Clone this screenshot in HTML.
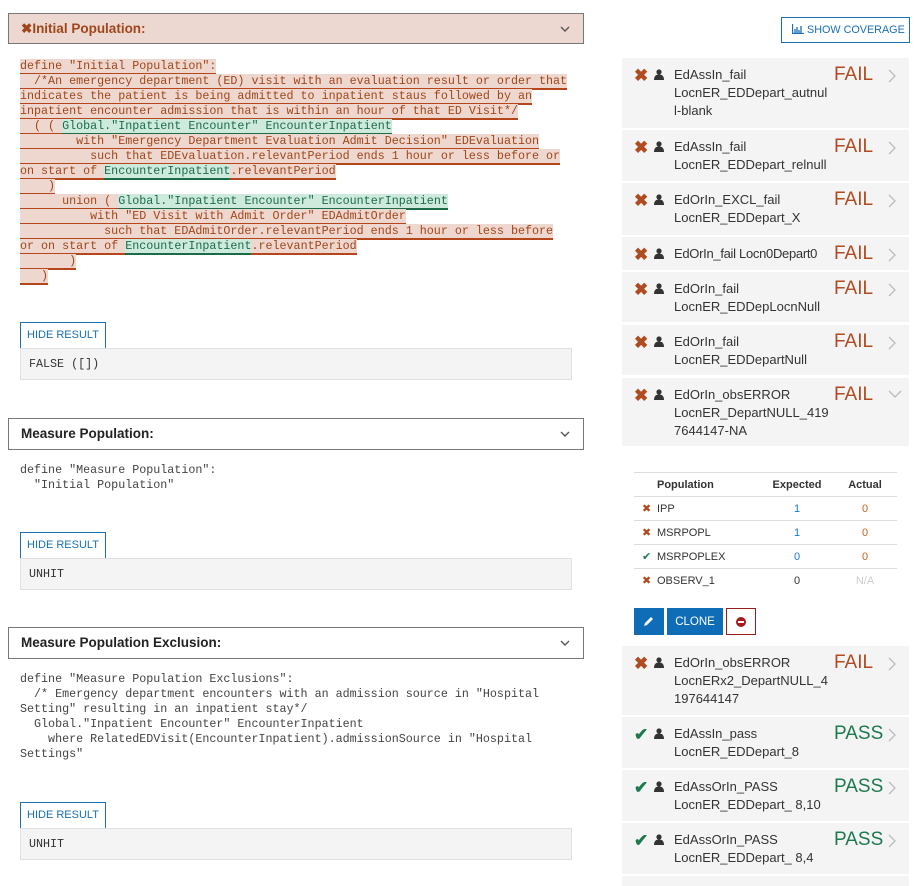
<!DOCTYPE html>
<html><head><meta charset="utf-8">
<style>
*{box-sizing:border-box;margin:0;padding:0}
body{width:918px;height:883px;background:#fff;font-family:"Liberation Sans",sans-serif;position:relative;overflow:hidden;color:#333}
.a{position:absolute}
.hdr{position:absolute;left:8px;width:576px;border:1px solid #777;background:#fff;font-weight:bold;font-size:13.5px;color:#222;padding-left:12px}
.chev{position:absolute;right:12px;top:50%;margin-top:-6px}
pre,.mono{font-family:"Liberation Mono",monospace;font-size:11.7px;line-height:15px;white-space:pre}
.code{position:absolute;left:20px;color:#444}
.r{background:#eed7cf;border-bottom:2px double #b5451b;color:#a0461a}
.g{background:#cdeadd;border-bottom:2px solid #1b6b48;color:#1c6b4c}
.btn{position:absolute;left:20px;width:86px;height:27px;border:1px solid #1a6fb5;color:#1a6fb5;font-size:11px;line-height:25px;text-align:center;background:#fff;white-space:nowrap}
.res{position:absolute;left:20px;width:552px;height:32px;background:#f4f4f4;border:1px solid #e0e0e0;font-family:"Liberation Mono",monospace;font-size:11.7px;color:#333;padding:8px 0 0 8px}
.it{position:absolute;left:622px;width:287px;background:#f4f4f4}
.it .ic{position:absolute;left:12px;top:8px;font-size:17px;font-weight:bold}
.it .p{position:absolute;left:32px;top:11px}
.it .t{position:absolute;left:52px;top:8px;font-size:13px;line-height:18px;color:#333;white-space:nowrap}
.it .s{position:absolute;left:212px;top:6px;font-size:19px}
.it .c{position:absolute;left:266px;top:11px}
.x{color:#b04a1f}.k{color:#1d7a4f}
table{border-collapse:collapse;font-size:11px}
td{height:24px;border-top:1px solid #ddd}
</style></head><body>

<div class="hdr" style="top:13px;height:31px;line-height:29px;background:#ecd8d0;color:#a0461a"><span style="color:#a0461a">✖</span>Initial Population:<svg class="chev" width="12" height="12" viewBox="0 0 12 12"><path d="M2 4l4 4 4-4" stroke="#555" stroke-width="1.4" fill="none"/></svg></div>

<div class="code mono" style="top:59px"><span class="r">define "Initial Population":</span>
<span class="r">  /*An emergency department (ED) visit with an evaluation result or order that</span>
<span class="r">indicates the patient is being admitted to inpatient staus followed by an</span>
<span class="r">inpatient encounter admission that is within an hour of that ED Visit*/</span>
<span class="r">  ( ( </span><span class="g">Global."Inpatient Encounter" EncounterInpatient</span>
<span class="r">        with "Emergency Department Evaluation Admit Decision" EDEvaluation</span>
<span class="r">          such that EDEvaluation.relevantPeriod ends 1 hour or less before or</span>
<span class="r">on start of </span><span class="g">EncounterInpatient</span><span class="r">.relevantPeriod</span>
<span class="r">    )</span>
<span class="r">      union ( </span><span class="g">Global."Inpatient Encounter" EncounterInpatient</span>
<span class="r">          with "ED Visit with Admit Order" EDAdmitOrder</span>
<span class="r">            such that EDAdmitOrder.relevantPeriod ends 1 hour or less before</span>
<span class="r">or on start of </span><span class="g">EncounterInpatient</span><span class="r">.relevantPeriod</span>
<span class="r">       )</span>
<span class="r">   )</span></div>

<div class="btn" style="top:322px">HIDE RESULT</div>
<div class="res" style="top:348px">FALSE ([])</div>

<div class="hdr" style="top:418px;height:32px;line-height:30px">Measure Population:<svg class="chev" width="12" height="12" viewBox="0 0 12 12"><path d="M2 4l4 4 4-4" stroke="#555" stroke-width="1.4" fill="none"/></svg></div>
<div class="code mono" style="top:463px">define "Measure Population":
  "Initial Population"</div>
<div class="btn" style="top:532px">HIDE RESULT</div>
<div class="res" style="top:558px">UNHIT</div>

<div class="hdr" style="top:627px;height:32px;line-height:30px">Measure Population Exclusion:<svg class="chev" width="12" height="12" viewBox="0 0 12 12"><path d="M2 4l4 4 4-4" stroke="#555" stroke-width="1.4" fill="none"/></svg></div>
<div class="code mono" style="top:672px">define "Measure Population Exclusions":
  /* Emergency department encounters with an admission source in "Hospital
Setting" resulting in an inpatient stay*/
  Global."Inpatient Encounter" EncounterInpatient
    where RelatedEDVisit(EncounterInpatient).admissionSource in "Hospital
Settings"</div>
<div class="btn" style="top:802px">HIDE RESULT</div>
<div class="res" style="top:828px">UNHIT</div>

<div class="a" style="left:781px;top:17px;width:129px;height:26px;border:1px solid #1a6fb5;color:#1a6fb5;font-size:10.8px;line-height:24px;padding-left:10px;white-space:nowrap"><svg width="12" height="10" viewBox="0 0 12 10" style="vertical-align:-1px"><path d="M0.5 0v9.5H12M3 9V5M5 9V3M7 9V6M9 9V2" stroke="#1a6fb5" stroke-width="1.3" fill="none"/></svg> SHOW COVERAGE</div>

<div class="it" style="top:58px;height:70px"><span class="ic x">✖</span><svg class="p" width="10" height="11" viewBox="0 0 10 11"><circle cx="5" cy="3" r="2.6" fill="#333"/><path d="M0 11c0-4 2-5.5 5-5.5s5 1.5 5 5.5z" fill="#333"/></svg><div class="t">EdAssIn_fail<br>LocnER_EDDepart_autnul<br>l-blank</div><div class="s x">FAIL</div><svg class="c" width="8" height="14" viewBox="0 0 8 14"><path d="M1 1l6 6-6 6" stroke="#bbb" stroke-width="1.3" fill="none"/></svg></div>
<div class="it" style="top:130px;height:51px"><span class="ic x">✖</span><svg class="p" width="10" height="11" viewBox="0 0 10 11"><circle cx="5" cy="3" r="2.6" fill="#333"/><path d="M0 11c0-4 2-5.5 5-5.5s5 1.5 5 5.5z" fill="#333"/></svg><div class="t">EdAssIn_fail<br>LocnER_EDDepart_relnull</div><div class="s x">FAIL</div><svg class="c" width="8" height="14" viewBox="0 0 8 14"><path d="M1 1l6 6-6 6" stroke="#bbb" stroke-width="1.3" fill="none"/></svg></div>
<div class="it" style="top:183px;height:52px"><span class="ic x">✖</span><svg class="p" width="10" height="11" viewBox="0 0 10 11"><circle cx="5" cy="3" r="2.6" fill="#333"/><path d="M0 11c0-4 2-5.5 5-5.5s5 1.5 5 5.5z" fill="#333"/></svg><div class="t">EdOrIn_EXCL_fail<br>LocnER_EDDepart_X</div><div class="s x">FAIL</div><svg class="c" width="8" height="14" viewBox="0 0 8 14"><path d="M1 1l6 6-6 6" stroke="#bbb" stroke-width="1.3" fill="none"/></svg></div>
<div class="it" style="top:237px;height:33px"><span class="ic x">✖</span><svg class="p" width="10" height="11" viewBox="0 0 10 11"><circle cx="5" cy="3" r="2.6" fill="#333"/><path d="M0 11c0-4 2-5.5 5-5.5s5 1.5 5 5.5z" fill="#333"/></svg><div class="t" style="letter-spacing:-0.3px">EdOrIn_fail Locn0Depart0</div><div class="s x">FAIL</div><svg class="c" width="8" height="14" viewBox="0 0 8 14"><path d="M1 1l6 6-6 6" stroke="#bbb" stroke-width="1.3" fill="none"/></svg></div>
<div class="it" style="top:272px;height:50px"><span class="ic x">✖</span><svg class="p" width="10" height="11" viewBox="0 0 10 11"><circle cx="5" cy="3" r="2.6" fill="#333"/><path d="M0 11c0-4 2-5.5 5-5.5s5 1.5 5 5.5z" fill="#333"/></svg><div class="t">EdOrIn_fail<br>LocnER_EDDepLocnNull</div><div class="s x">FAIL</div><svg class="c" width="8" height="14" viewBox="0 0 8 14"><path d="M1 1l6 6-6 6" stroke="#bbb" stroke-width="1.3" fill="none"/></svg></div>
<div class="it" style="top:325px;height:50px"><span class="ic x">✖</span><svg class="p" width="10" height="11" viewBox="0 0 10 11"><circle cx="5" cy="3" r="2.6" fill="#333"/><path d="M0 11c0-4 2-5.5 5-5.5s5 1.5 5 5.5z" fill="#333"/></svg><div class="t">EdOrIn_fail<br>LocnER_EDDepartNull</div><div class="s x">FAIL</div><svg class="c" width="8" height="14" viewBox="0 0 8 14"><path d="M1 1l6 6-6 6" stroke="#bbb" stroke-width="1.3" fill="none"/></svg></div>
<div class="it" style="top:378px;height:68px"><span class="ic x">✖</span><svg class="p" width="10" height="11" viewBox="0 0 10 11"><circle cx="5" cy="3" r="2.6" fill="#333"/><path d="M0 11c0-4 2-5.5 5-5.5s5 1.5 5 5.5z" fill="#333"/></svg><div class="t">EdOrIn_obsERROR<br>LocnER_DepartNULL_419<br>7644147-NA</div><div class="s x">FAIL</div><svg class="c" style="top:12px" width="14" height="8" viewBox="0 0 14 8"><path d="M1 1l6 6 6-6" stroke="#bbb" stroke-width="1.3" fill="none"/></svg></div>

<table class="a" style="left:634px;top:472px;width:263px;color:#333">
<tr style="font-weight:bold"><td style="width:23px"></td><td style="width:104px">Population</td><td style="width:72px;text-align:center">Expected</td><td style="text-align:center">Actual</td></tr>
<tr><td class="x" style="padding-left:8px">✖</td><td>IPP</td><td style="text-align:center;color:#1a7ac5">1</td><td style="text-align:center;color:#c0601e">0</td></tr>
<tr><td class="x" style="padding-left:8px">✖</td><td>MSRPOPL</td><td style="text-align:center;color:#1a7ac5">1</td><td style="text-align:center;color:#c0601e">0</td></tr>
<tr><td class="k" style="padding-left:8px">✔</td><td>MSRPOPLEX</td><td style="text-align:center;color:#1a7ac5">0</td><td style="text-align:center;color:#c0601e">0</td></tr>
<tr><td class="x" style="padding-left:8px">✖</td><td>OBSERV_1</td><td style="text-align:center">0</td><td style="text-align:center;color:#ccc">N/A</td></tr>
</table>

<div class="a" style="left:634px;top:608px;width:30px;height:27px;background:#0f6db8"><svg style="position:absolute;left:9px;top:8px" width="11" height="11" viewBox="0 0 11 11"><path d="M1 10l1-3 6-6 2 2-6 6z" fill="#fff"/></svg></div>
<div class="a" style="left:667px;top:608px;width:56px;height:27px;background:#0f6db8;color:#fff;font-size:11.5px;line-height:28px;text-align:center">CLONE</div>
<div class="a" style="left:726px;top:608px;width:30px;height:27px;border:1px solid #9b1c1c;background:#fff"><svg style="position:absolute;left:9px;top:8px" width="10" height="10" viewBox="0 0 10 10"><circle cx="5" cy="5" r="5" fill="#a51c1c"/><rect x="2" y="4" width="6" height="2" fill="#fff"/></svg></div>

<div class="it" style="top:646px;height:69px"><span class="ic x">✖</span><svg class="p" width="10" height="11" viewBox="0 0 10 11"><circle cx="5" cy="3" r="2.6" fill="#333"/><path d="M0 11c0-4 2-5.5 5-5.5s5 1.5 5 5.5z" fill="#333"/></svg><div class="t">EdOrIn_obsERROR<br>LocnERx2_DepartNULL_4<br>197644147</div><div class="s x">FAIL</div><svg class="c" width="8" height="14" viewBox="0 0 8 14"><path d="M1 1l6 6-6 6" stroke="#bbb" stroke-width="1.3" fill="none"/></svg></div>
<div class="it" style="top:717px;height:51px"><span class="ic k">✔</span><svg class="p" width="10" height="11" viewBox="0 0 10 11"><circle cx="5" cy="3" r="2.6" fill="#333"/><path d="M0 11c0-4 2-5.5 5-5.5s5 1.5 5 5.5z" fill="#333"/></svg><div class="t">EdAssIn_pass<br>LocnER_EDDepart_8</div><div class="s k">PASS</div><svg class="c" width="8" height="14" viewBox="0 0 8 14"><path d="M1 1l6 6-6 6" stroke="#bbb" stroke-width="1.3" fill="none"/></svg></div>
<div class="it" style="top:770px;height:51px"><span class="ic k">✔</span><svg class="p" width="10" height="11" viewBox="0 0 10 11"><circle cx="5" cy="3" r="2.6" fill="#333"/><path d="M0 11c0-4 2-5.5 5-5.5s5 1.5 5 5.5z" fill="#333"/></svg><div class="t">EdAssOrIn_PASS<br>LocnER_EDDepart_ 8,10</div><div class="s k">PASS</div><svg class="c" width="8" height="14" viewBox="0 0 8 14"><path d="M1 1l6 6-6 6" stroke="#bbb" stroke-width="1.3" fill="none"/></svg></div>
<div class="it" style="top:823px;height:51px"><span class="ic k">✔</span><svg class="p" width="10" height="11" viewBox="0 0 10 11"><circle cx="5" cy="3" r="2.6" fill="#333"/><path d="M0 11c0-4 2-5.5 5-5.5s5 1.5 5 5.5z" fill="#333"/></svg><div class="t">EdAssOrIn_PASS<br>LocnER_EDDepart_ 8,4</div><div class="s k">PASS</div><svg class="c" width="8" height="14" viewBox="0 0 8 14"><path d="M1 1l6 6-6 6" stroke="#bbb" stroke-width="1.3" fill="none"/></svg></div>
<div class="it" style="top:876px;height:10px"></div>
</body></html>
